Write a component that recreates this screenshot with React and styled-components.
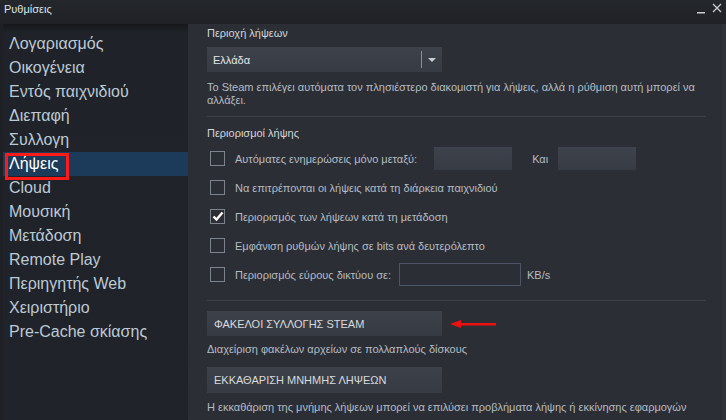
import styled, { createGlobalStyle } from "styled-components";

const GlobalStyle = createGlobalStyle`
    html, body {
        margin: 0;
        padding: 0;
        background: #1e2025;
        font-family: "Liberation Sans", Arial, sans-serif;
    }
`;

const Window = styled.div`
    width: 726px;
    height: 420px;
    display: flex;
    flex-direction: column;
    overflow: hidden;
    background: #1e2025;
`;

const TitleBar = styled.div`
    height: 24px;
    flex: none;
    display: flex;
    align-items: flex-start;
    justify-content: space-between;
    padding: 0 4px 0 4px;
    background: linear-gradient(#24272c, #1f2126);
`;

const Title = styled.span`
    font-size: 11px;
    color: #dfe3e6;
    padding-top: 3px;
`;

const Controls = styled.div`
    display: flex;
    align-items: flex-start;
    gap: 6px;
    padding-top: 3px;
`;

const Body = styled.div`
    flex: 1;
    display: flex;
    min-height: 0;
`;

const Sidebar = styled.div`
    width: 185px;
    flex: none;
    margin-left: 3px;
    padding-top: 8px;
    background: linear-gradient(#15171b 0px, #1f2228 8px, #202329 100%);
    display: flex;
    flex-direction: column;
`;

const NavItem = styled.div`
    position: relative;
    height: 24px;
    line-height: 24px;
    padding-left: 6px;
    font-size: 16px;
    color: ${p => (p.$active ? "#ffffff" : "#bccad6")};
    background: ${p => (p.$active ? "#1c3a5a" : "transparent")};
`;

const Highlight = styled.span`
    position: absolute;
    left: 2px;
    top: 1px;
    width: 58px;
    height: 21px;
    border: 3px solid #ff1a1a;
`;

const Content = styled.div`
    flex: 1;
    display: flex;
    background: #2b2e34;
`;

const Panel = styled.div`
    flex: 1;
    padding: 0 16px 0 19px;
    display: flex;
    flex-direction: column;
`;

const Scrollbar = styled.div`
    width: 4px;
    background: #2f3238;
`;

const Section = styled.div`
    display: flex;
    flex-direction: column;
    padding: ${p => p.$pad || "0"};
    border-bottom: ${p => (p.$line ? "1px solid #3d4148" : "none")};
`;

const Heading = styled.div`
    font-size: 11px;
    color: #d3d7db;
    line-height: 14px;
    margin-bottom: ${p => p.$mb || "0"};
`;

const Note = styled.div`
    font-size: 11px;
    line-height: 13px;
    color: #b4bcc4;
    margin: ${p => p.$m || "0"};
    white-space: ${p => (p.$nowrap ? "nowrap" : "normal")};
`;

const Select = styled.div`
    width: 235px;
    height: 25px;
    display: flex;
    align-items: center;
    background: linear-gradient(#3d414a, #373b43);
    font-size: 11px;
    color: #e4e7ea;
`;

const SelectValue = styled.span`
    flex: 1;
    padding-left: 6px;
`;

const SelectCaret = styled.span`
    width: 20px;
    height: 17px;
    border-left: 1px solid #8a8f96;
    display: flex;
    align-items: center;
    justify-content: center;
`;

const Row = styled.div`
    height: 29px;
    display: flex;
    align-items: center;
`;

const Box = styled.span`
    width: 13px;
    height: 13px;
    flex: none;
    margin: 0 10px 0 3px;
    border: 1px solid #7d838c;
    display: flex;
    align-items: center;
    justify-content: center;
`;

const Label = styled.span`
    font-size: 11px;
    color: #b4bcc4;
    white-space: nowrap;
`;

const Field = styled.span`
    width: ${p => p.$w}px;
    height: ${p => p.$h || 23}px;
    margin-left: ${p => p.$ml || 0}px;
    flex: none;
    box-sizing: border-box;
    background: ${p => (p.$outlined ? "transparent" : "linear-gradient(#3d424c, #373b44)")};
    border: ${p => (p.$outlined ? "1px solid #4b5566" : "none")};
`;

const Inline = styled.span`
    font-size: 11px;
    color: #b4bcc4;
    margin-left: ${p => p.$ml || 0}px;
`;

const ButtonRow = styled.div`
    display: flex;
    align-items: center;
    gap: 8px;
`;

const Button = styled.div`
    width: 235px;
    height: ${p => p.$h || 25}px;
    display: flex;
    align-items: center;
    padding-left: 7px;
    box-sizing: border-box;
    font-size: 11px;
    color: #d8dbde;
    background: linear-gradient(#3d414a, #363a42);
`;

const items = [
    "Λογαριασμός",
    "Οικογένεια",
    "Εντός παιχνιδιού",
    "Διεπαφή",
    "Συλλογη",
    "Λήψεις",
    "Cloud",
    "Μουσική",
    "Μετάδοση",
    "Remote Play",
    "Περιηγητής Web",
    "Χειριστήριο",
    "Pre-Cache σκίασης",
];

const Check = () => (
    <svg width="12" height="11" viewBox="0 0 12 11">
        <path d="M1.5 5.5 L4.5 8.5 L10.5 1.5" fill="none" stroke="#ffffff" strokeWidth="2.4" />
    </svg>
);

const Checkbox = ({ checked }) => <Box>{checked && <Check />}</Box>;

const App = () => (
    <>
        <GlobalStyle />
        <Window>
            <TitleBar>
                <Title>Ρυθμίσεις</Title>
                <Controls>
                    <svg width="9" height="11" viewBox="0 0 9 11">
                        <rect x="0" y="9" width="8" height="1.5" fill="#c9ccd0" />
                    </svg>
                    <svg width="10" height="10" viewBox="0 0 10 10">
                        <path d="M1 1 L9 9 M9 1 L1 9" stroke="#c9ccd0" strokeWidth="1.3" />
                    </svg>
                </Controls>
            </TitleBar>
            <Body>
                <Sidebar>
                    {items.map(name => (
                        <NavItem key={name} $active={name === "Λήψεις"}>
                            {name}
                            {name === "Λήψεις" && <Highlight />}
                        </NavItem>
                    ))}
                </Sidebar>
                <Content>
                    <Panel>
                        <Section $line $pad="2px 0 9px 0">
                            <Heading $mb="7px">Περιοχή λήψεων</Heading>
                            <Select>
                                <SelectValue>Ελλάδα</SelectValue>
                                <SelectCaret>
                                    <svg width="8" height="4" viewBox="0 0 8 4">
                                        <path d="M0 0 L8 0 L4 4 Z" fill="#c9ccd0" />
                                    </svg>
                                </SelectCaret>
                            </Select>
                            <Note $m="9px 0 0 0">
                                Το Steam επιλέγει αυτόματα τον πλησιέστερο διακομιστή για λήψεις, αλλά η ρύθμιση αυτή μπορεί να
                                αλλάξει.
                            </Note>
                        </Section>
                        <Section $line $pad="9px 0 11px 0">
                            <Heading $mb="4px">Περιορισμοί λήψης</Heading>
                            <Row>
                                <Checkbox />
                                <Label>Αυτόματες ενημερώσεις μόνο μεταξύ:</Label>
                                <Field $w={78} $ml={17} />
                                <Inline $ml={20}>Και</Inline>
                                <Field $w={78} $ml={10} />
                            </Row>
                            <Row>
                                <Checkbox />
                                <Label>Να επιτρέπονται οι λήψεις κατά τη διάρκεια παιχνιδιού</Label>
                            </Row>
                            <Row>
                                <Checkbox checked />
                                <Label>Περιορισμός των λήψεων κατά τη μετάδοση</Label>
                            </Row>
                            <Row>
                                <Checkbox />
                                <Label>Εμφάνιση ρυθμών λήψης σε bits ανά δευτερόλεπτο</Label>
                            </Row>
                            <Row>
                                <Checkbox />
                                <Label>Περιορισμός εύρους δικτύου σε:</Label>
                                <Field $w={122} $ml={8} $outlined />
                                <Inline $ml={6}>KB/s</Inline>
                            </Row>
                        </Section>
                        <Section $pad="10px 0 0 0">
                            <ButtonRow>
                                <Button>ΦΑΚΕΛΟΙ ΣΥΛΛΟΓΗΣ STEAM</Button>
                                <svg width="46" height="8" viewBox="0 0 46 8">
                                    <path d="M0 4 L11 0 L11 3 L46 3 L46 5.5 L11 5.5 L11 8 Z" fill="#ee1111" />
                                </svg>
                            </ButtonRow>
                            <Note $m="7px 0 11px 0">Διαχείριση φακέλων αρχείων σε πολλαπλούς δίσκους</Note>
                            <Button $h={26}>ΕΚΚΑΘΑΡΙΣΗ ΜΝΗΜΗΣ ΛΗΨΕΩΝ</Button>
                            <Note $m="8px 0 0 0" $nowrap>
                                Η εκκαθάριση της μνήμης λήψεων μπορεί να επιλύσει προβλήματα λήψης ή εκκίνησης εφαρμογών
                            </Note>
                        </Section>
                    </Panel>
                    <Scrollbar />
                </Content>
            </Body>
        </Window>
    </>
);

export default App;
